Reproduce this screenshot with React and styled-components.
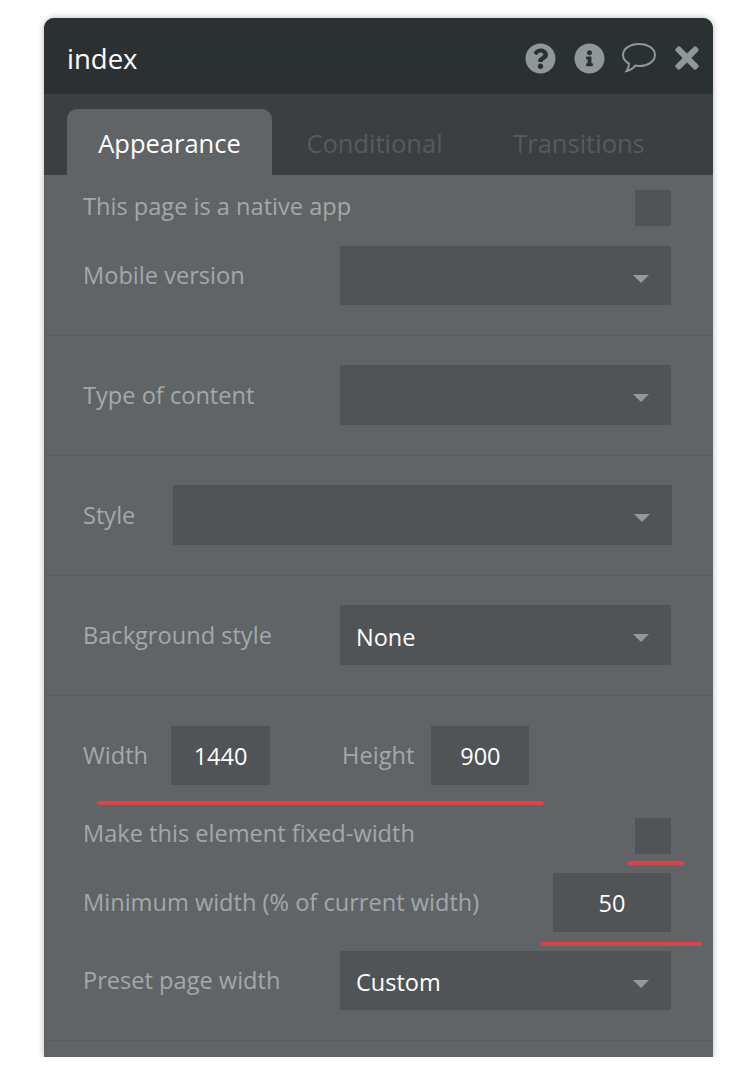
import styled, { createGlobalStyle } from 'styled-components';
import { FaQuestionCircle, FaInfoCircle, FaTimes } from 'react-icons/fa';

const GlobalStyle = createGlobalStyle`
  html, body {
    margin: 0;
    padding: 0;
    background: #fff;
  }
  body {
    font-family: "Open Sans", "Liberation Sans", sans-serif;
  }
`;

const Page = styled.div`
  position: relative;
  width: 755px;
  height: 1077px;
  padding: 18px 42px 20px 44px;
  box-sizing: border-box;
  overflow: hidden;
`;

const Panel = styled.div`
  height: 1039px;
  background: #606466;
  border-radius: 10px 10px 0 0;
  box-shadow: 0 0 6px rgba(0, 0, 0, 0.3);
  clip-path: inset(-8px -8px 0 -8px);
`;

const Header = styled.div`
  display: flex;
  align-items: center;
  justify-content: space-between;
  height: 76px;
  padding: 0 9px 0 23px;
  background: #2b3132;
  border-radius: 10px 10px 0 0;
`;

const Title = styled.div`
  padding-top: 4px;
  font-size: 27.5px;
  color: #fff;
`;

const Icons = styled.div`
  display: flex;
  align-items: center;
  padding-top: 4px;
  color: #8f9799;
`;

const IconSlot = styled.div`
  display: flex;
  margin-left: ${({ $gap }) => $gap}px;
`;

const TabBar = styled.div`
  display: flex;
  align-items: flex-end;
  height: 81px;
  padding-left: 23px;
  background: #3c3f41;
`;

const Tab = styled.div`
  display: flex;
  align-items: center;
  justify-content: center;
  width: ${({ $width }) => $width}px;
  height: 66px;
  padding-top: 1px;
  box-sizing: border-box;
  font-size: 25.5px;
  border-radius: 10px 10px 0 0;
  color: ${({ $active }) => ($active ? '#fff' : '#565a5c')};
  background: ${({ $active }) => ($active ? '#606466' : 'transparent')};
`;

const Section = styled.div`
  display: flex;
  flex-direction: column;
  height: ${({ $height }) => $height}px;
  padding: ${({ $top }) => $top}px ${({ $right }) => $right || 42}px 0 39px;
  box-sizing: border-box;
  border-bottom: 1px solid #5a5e60;
`;

const Row = styled.div`
  display: flex;
  align-items: center;
  justify-content: space-between;
  margin-top: ${({ $mt }) => $mt || 0}px;
`;

const Group = styled.div`
  display: flex;
  align-items: center;
`;

const Label = styled.div`
  padding-bottom: ${({ $raise }) => $raise || 0}px;
  font-size: 23.6px;
  line-height: 28px;
  color: #a3a8aa;
  margin-left: ${({ $ml }) => $ml || 0}px;
`;

const Checkbox = styled.div`
  width: 36px;
  height: 36px;
  background: #505456;
`;

const Select = styled.div`
  display: flex;
  align-items: center;
  justify-content: space-between;
  width: ${({ $width }) => $width}px;
  height: ${({ $height }) => $height || 60}px;
  padding: 0 22px 0 16px;
  box-sizing: border-box;
  background: #505456;
  color: #fff;
  font-size: 23.5px;
`;

const SelectValue = styled.span`
  padding-top: 3px;
`;

const Caret = styled.div`
  width: 0;
  height: 0;
  margin-top: 6px;
  border-left: 8px solid transparent;
  border-right: 8px solid transparent;
  border-top: 8px solid #94999b;
`;

const NumberBox = styled.div`
  display: flex;
  align-items: center;
  justify-content: center;
  width: ${({ $width }) => $width}px;
  height: 59px;
  margin-left: ${({ $ml }) => $ml || 0}px;
  background: #505456;
  color: #fff;
  font-size: 23.5px;
`;

/* the hand drawn red marks sit on top of the panel */
const RedMark = styled.div`
  position: absolute;
  left: ${({ $left }) => $left}px;
  top: ${({ $top }) => $top}px;
  width: ${({ $width }) => $width}px;
  height: 4px;
  border-radius: 2px;
  background: #dc4349;
`;

function SpeechIcon() {
  return (
    <svg width="36" height="32" viewBox="0 0 36 32" fill="none" stroke="currentColor" strokeWidth="2">
      <path d="M18 2C9 2 2 6.800 2 13c0 3.600 2.400 6.600 6 8.600 0 2.800-.8 5.200-2.400 7.400 3.400-.6 6.600-2.600 8.600-5.400 1.200.2 2.500.4 3.800.4 9 0 16-4.800 16-11S27 2 18 2z" />
    </svg>
  );
}

function SelectBox({ width, height, value }) {
  return (
    <Select $width={width} $height={height}>
      <SelectValue>{value}</SelectValue>
      <Caret />
    </Select>
  );
}

function App() {
  return (
    <Page>
      <GlobalStyle />
      <Panel>
        <Header>
          <Title>index</Title>
          <Icons>
            <IconSlot $gap={0}><FaQuestionCircle size={31} /></IconSlot>
            <IconSlot $gap={18}><FaInfoCircle size={31} /></IconSlot>
            <IconSlot $gap={16}><SpeechIcon /></IconSlot>
            <IconSlot $gap={13}><FaTimes size={34} /></IconSlot>
          </Icons>
        </Header>
        <TabBar>
          <Tab $active $width={205}>Appearance</Tab>
          <Tab $width={205}>Conditional</Tab>
          <Tab $width={204}>Transitions</Tab>
        </TabBar>
        <Section $height={161} $top={15}>
          <Row>
            <Label $raise={4}>This page is a native app</Label>
            <Checkbox />
          </Row>
          <Row $mt={20}>
            <Label $raise={2}>Mobile version</Label>
            <SelectBox width={331} height={59} />
          </Row>
        </Section>
        <Section $height={120} $top={29}>
          <Row>
            <Label>Type of content</Label>
            <SelectBox width={331} />
          </Row>
        </Section>
        <Section $height={120} $top={29} $right={41}>
          <Row>
            <Label>Style</Label>
            <SelectBox width={499} />
          </Row>
        </Section>
        <Section $height={120} $top={29}>
          <Row>
            <Label>Background style</Label>
            <SelectBox width={331} value="None" />
          </Row>
        </Section>
        <Section $height={345} $top={30}>
          <Group>
            <Label $raise={2}>Width</Label>
            <NumberBox $width={99} $ml={23}>1440</NumberBox>
            <Label $ml={72} $raise={2}>Height</Label>
            <NumberBox $width={98} $ml={17}>900</NumberBox>
          </Group>
          <Row $mt={33}>
            <Label $raise={6}>Make this element fixed-width</Label>
            <Checkbox />
          </Row>
          <Row $mt={19}>
            <Label $raise={2}>Minimum width (% of current width)</Label>
            <NumberBox $width={118}>50</NumberBox>
          </Row>
          <Row $mt={19}>
            <Label $raise={2}>Preset page width</Label>
            <SelectBox width={331} height={59} value="Custom" />
          </Row>
        </Section>
      </Panel>
      <RedMark $left={97} $top={801} $width={447} />
      <RedMark $left={627} $top={861} $width={57} />
      <RedMark $left={540} $top={942} $width={162} />
    </Page>
  );
}

export default App;
